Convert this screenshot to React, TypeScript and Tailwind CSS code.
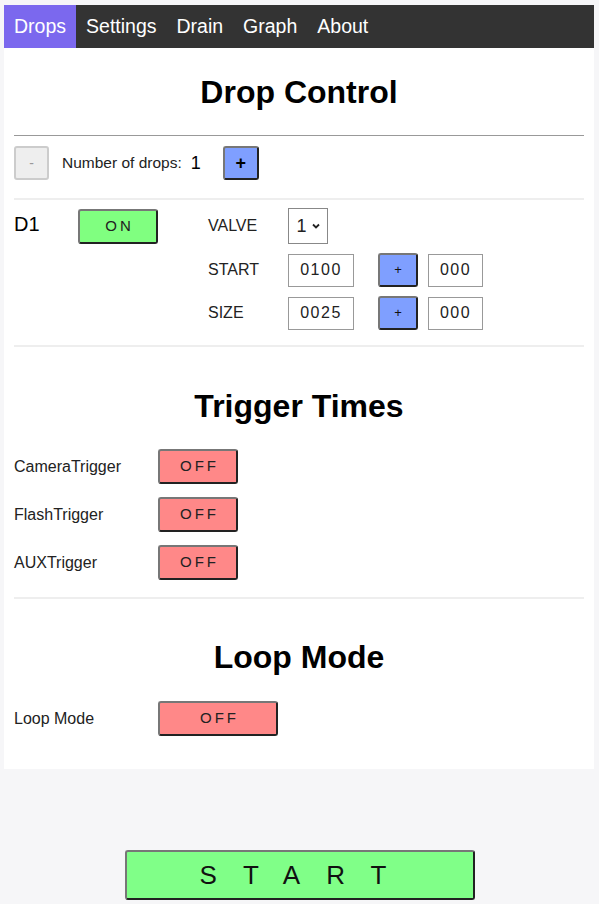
import React from 'react';

const font = { fontFamily: '"Liberation Sans", Arial, sans-serif' };

const btnBorder = 'border-2 border-t-[#777] border-l-[#777] border-r-[#222] border-b-[#222] rounded-[3px]';

const ToggleButton: React.FC<{ label: string; on?: boolean; wide?: boolean }> = ({ label, on, wide }) => (
  <div
    className={`${btnBorder} ${on ? 'bg-[#80ff80]' : 'bg-[#ff8888]'} ${wide ? 'w-[120px]' : 'w-[80px]'} h-[35px] flex items-center justify-center text-[15px] tracking-[3px] pl-[3px] text-[#222]`}
  >
    {label}
  </div>
);

const Title: React.FC<{ text: string; pt: string }> = ({ text, pt }) => (
  <h2 className={`${pt} text-center text-[32px] leading-[36px] font-bold text-black`}>{text}</h2>
);

const NumBox: React.FC<{ value: string; w: string }> = ({ value, w }) => (
  <div className={`${w} h-[33px] border border-[#999] flex items-center justify-center text-[16px] tracking-[1.5px] text-[#222]`}>
    {value}
  </div>
);

const SmallPlus = () => (
  <div className={`${btnBorder} bg-[#7f9fff] w-[40px] h-[34px] flex items-center justify-center text-[13px] text-[#111]`}>+</div>
);

const TriggerRow: React.FC<{ label: string; wide?: boolean }> = ({ label, wide }) => (
  <div className="flex items-center h-[35px]">
    <span className="w-[144px] text-[16px] text-[#222]">{label}</span>
    <ToggleButton label="OFF" wide={wide} />
  </div>
);

export default function App() {
  const tabs = ['Drops', 'Settings', 'Drain', 'Graph', 'About'];
  return (
    <div style={font} className="min-h-[904px] bg-[#f6f6f8] px-[4px] pt-[5px]">
      <div className="bg-white w-[590px]">
        {/* nav */}
        <nav className="flex h-[43px] bg-[#333]">
          {tabs.map((t, i) => (
            <div
              key={t}
              className={`px-[10px] flex items-center text-[19.5px] text-white ${i === 0 ? 'bg-[#7b68ee]' : ''}`}
            >
              {t}
            </div>
          ))}
        </nav>

        <div className="px-[10px] pb-[33px]">
          <Title text="Drop Control" pt="pt-[26px]" />
          <div className="mt-[25px] h-px bg-[#999]" />

          <div className="mt-[10px] flex items-center h-[34px]">
            <div className="w-[35px] h-[34px] rounded-[3px] border-2 border-[#ccc] bg-[#eee] flex items-center justify-center text-[14px] text-[#999]">-</div>
            <span className="ml-[13px] text-[15.5px] text-[#222]">Number of drops:</span>
            <span className="ml-[9px] text-[18px] text-black">1</span>
            <div className={`${btnBorder} ml-[22px] w-[36px] h-[34px] bg-[#7f9fff] flex items-center justify-center text-[18px] font-bold text-black`}>+</div>
          </div>
          <div className="mt-[18px] h-[2px] bg-[#eee]" />

          {/* D1 */}
          <div className="mt-[8px] flex">
            <span className="w-[64px] text-[20px] leading-[32px] text-black">D1</span>
            <div className="mt-[1px]">
              <ToggleButton label="ON" on />
            </div>
            <div className="ml-[50px] flex flex-col gap-[9px]">
              <div className="flex items-center">
                <span className="w-[80px] text-[16px] text-[#222]">VALVE</span>
                <div className="w-[40px] h-[36px] border border-[#888] flex items-center justify-center gap-[5px] text-[18px] text-[#222]">
                  1
                  <svg width="8" height="6" viewBox="0 0 8 6">
                    <path d="M1 1.5 L4 4.5 L7 1.5" stroke="#222" strokeWidth="1.8" fill="none" />
                  </svg>
                </div>
              </div>
              <div className="flex items-center">
                <span className="w-[80px] text-[16px] text-[#222]">START</span>
                <NumBox value="0100" w="w-[66px]" />
                <div className="ml-[24px]"><SmallPlus /></div>
                <div className="ml-[10px]"><NumBox value="000" w="w-[55px]" /></div>
              </div>
              <div className="flex items-center">
                <span className="w-[80px] text-[16px] text-[#222]">SIZE</span>
                <NumBox value="0025" w="w-[66px]" />
                <div className="ml-[24px]"><SmallPlus /></div>
                <div className="ml-[10px]"><NumBox value="000" w="w-[55px]" /></div>
              </div>
            </div>
          </div>
          <div className="mt-[15px] h-[2px] bg-[#eee]" />

          <Title text="Trigger Times" pt="pt-[41px]" />
          <div className="mt-[25px] flex flex-col gap-[13px]">
            <TriggerRow label="CameraTrigger" />
            <TriggerRow label="FlashTrigger" />
            <TriggerRow label="AUXTrigger" />
          </div>
          <div className="mt-[17px] h-[2px] bg-[#eee]" />

          <Title text="Loop Mode" pt="pt-[40px]" />
          <div className="mt-[26px]">
            <TriggerRow label="Loop Mode" wide />
          </div>
        </div>
      </div>

      <div className="mt-[81px] flex justify-center">
        <div className={`${btnBorder} w-[350px] h-[50px] bg-[#80ff88] flex items-center justify-center text-[26px] tracking-[26px] pl-[13px] text-[#111]`}>
          START
        </div>
      </div>
    </div>
  );
}
